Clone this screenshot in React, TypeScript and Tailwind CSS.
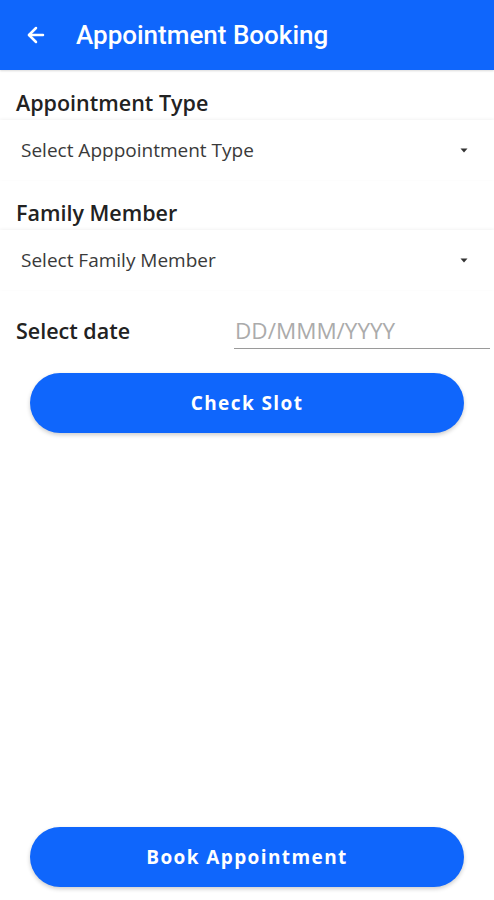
import { ArrowLeft } from "lucide-react";

type SelectFieldProps = {
  label: string;
  placeholder: string;
};

function SelectField({ label, placeholder }: SelectFieldProps) {
  return (
    <div>
      <div className="px-4 pt-[18px] h-[50px] text-[21.5px] leading-[30px] font-semibold text-[#222]">
        {label}
      </div>
      <div className="h-[60px] flex items-center justify-between pl-[21px] pr-[26px] bg-white shadow-[0_-1px_3px_rgba(0,0,0,0.05)]">
        <span className="text-[19px] text-[#3a3a3a]">{placeholder}</span>
        <svg width="8" height="5" viewBox="0 0 8 5" className="text-[#333]">
          <path d="M0.5 0.5h7L4 4.5z" fill="currentColor" />
        </svg>
      </div>
    </div>
  );
}

function PillButton({ children }: { children: React.ReactNode }) {
  return (
    <button
      type="button"
      className="w-[434px] h-[60px] mx-auto block rounded-full bg-[#0f66fc] text-white text-[19px] font-bold tracking-[1.4px] shadow-[0_2px_4px_rgba(0,0,0,0.2)]"
    >
      {children}
    </button>
  );
}

export default function App() {
  return (
    <div
      className="w-[494px] h-[900px] bg-white flex flex-col overflow-hidden"
      style={{ fontFamily: '"Open Sans", "Noto Sans", sans-serif' }}
    >
      <header className="h-[70px] bg-[#0f66fc] flex items-center shrink-0 shadow-[0_1px_2px_rgba(0,0,0,0.15)]">
        <ArrowLeft className="ml-[24px] text-white" size={24} strokeWidth={2.5} />
        <h1
          className="ml-[28px] text-white text-[26px] font-medium leading-none"
          style={{ fontFamily: "Roboto, sans-serif" }}
        >
          Appointment Booking
        </h1>
      </header>

      <SelectField label="Appointment Type" placeholder="Select Apppointment Type" />
      <SelectField label="Family Member" placeholder="Select Family Member" />

      <div className="flex items-center mt-[24px] h-[35px]">
        <div className="w-[234px] pl-4 text-[21.5px] font-semibold text-[#222]">Select date</div>
        <div className="w-[256px] h-full border-b-[1.5px] border-[#9a9a9a] flex items-center">
          <span className="text-[22.5px] text-[#ababab] pl-px">DD/MMM/YYYY</span>
        </div>
      </div>

      <div className="mt-[24px]">
        <PillButton>Check Slot</PillButton>
      </div>

      <div className="flex-1" />

      <div className="pb-[13px]">
        <PillButton>Book Appointment</PillButton>
      </div>
    </div>
  );
}
